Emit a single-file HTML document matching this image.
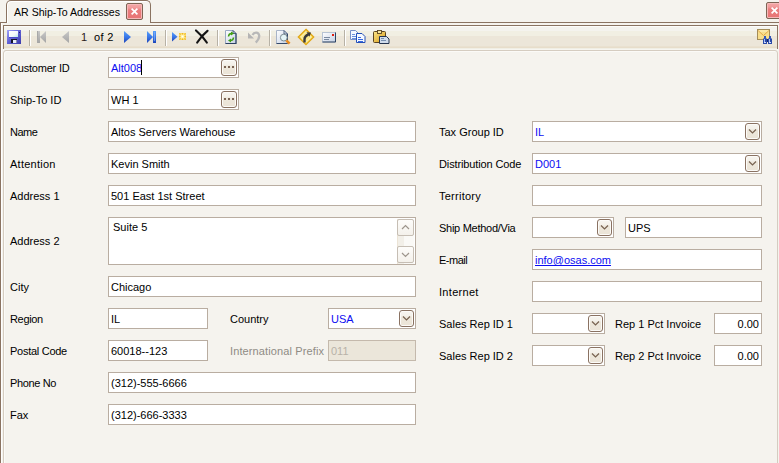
<!DOCTYPE html>
<html><head><meta charset="utf-8">
<style>
*{box-sizing:border-box;margin:0;padding:0}
html,body{width:779px;height:463px;overflow:hidden;background:#f5f3ee;font-family:"Liberation Sans",sans-serif;font-size:11px;color:#000}
.a{position:absolute}
.lbl{position:absolute;font-size:11px;line-height:13px;white-space:nowrap;color:#000}
.box{position:absolute;background:#fff;border:1px solid #b9ada1;height:21px}
.box .t{position:absolute;left:2px;top:4px;font-size:11px;line-height:13px;white-space:nowrap}
.blue{color:#0c0cf2}
.ell{position:absolute;width:16px;height:17px;top:1px;right:1px;border:1px solid #8a7262;border-radius:3px;background:linear-gradient(#f7f5f0 0,#f4f1ea 30%,#ede7db 42%,#ebe4d7 100%);box-shadow:inset 0 0 0 1px #fcfbf8}
.ell i{position:absolute;top:6px;width:2px;height:2px;background:#7b6454}
.dd{position:absolute;width:15px;height:17px;top:1px;right:1px;border:1px solid #8a7262;border-radius:3px;background:linear-gradient(#f7f5f0 0,#f4f1ea 30%,#ede7db 42%,#ebe4d7 100%);box-shadow:inset 0 0 0 1px #fcfbf8}
.dd svg{position:absolute;left:2px;top:4px}
.sbb{width:17px;height:17px;border:1px solid #c6beb4;border-radius:2px;background:linear-gradient(#fdfcfa,#f4f1eb)}
.cb{width:17px;height:17px;border:1px solid #7d6454;border-radius:2px;background:linear-gradient(#f4a8a8 0,#f09a9a 4px,#e97e7e 6px,#e87474 100%);box-shadow:inset 0 0 0 1px #f6b8b8}
.sep{position:absolute;top:30px;width:2px;height:16px;border-left:1px solid #b8b3a8;border-right:1px solid #fff}
</style></head><body>

<!-- tab strip -->
<div class="a" style="left:0;top:22px;width:779px;height:1px;background:#8a7361"></div>
<div class="a" style="left:6px;top:0;width:145px;height:23px;background:#f5f3ee;border:1px solid #8a7361;border-bottom:none;border-radius:5px 5px 0 0;box-shadow:inset 1px 1px 0 #fff"></div>
<div class="a" style="left:14px;top:5px;font-size:10.6px;line-height:14px;white-space:nowrap">AR Ship-To Addresses</div>
<div class="a cb" style="left:126px;top:3px"><svg class="a" style="left:4px;top:4px" width="7" height="7" viewBox="0 0 7 7"><path d="M0.6 0.6L6.4 6.4M6.4 0.6L0.6 6.4" stroke="#fff" stroke-width="1.7"/></svg></div>
<div class="a cb" style="left:766px;top:2px"><svg class="a" style="left:4px;top:4px" width="7" height="7" viewBox="0 0 7 7"><path d="M0.6 0.6L6.4 6.4M6.4 0.6L0.6 6.4" stroke="#fff" stroke-width="1.7"/></svg></div>
<div class="a" style="left:0;top:22px;width:1px;height:441px;background:#8a7361"></div>
<div class="a" style="left:1px;top:23px;width:1px;height:440px;background:#fff"></div>

<!-- toolbar -->
<div class="a" style="left:3px;top:25px;width:775px;height:24px;border:1px solid #8a7361;border-bottom:none;background:linear-gradient(#fdfcf9 0,#fdfcf9 1px,#f4f3ee 1px,#f4f3ee 5px,#f1efe3 5px,#f1efe3 10px,#ece6d9 10px,#ece6d9 20px,#e9e1d0 20px,#e9e1d0 21px,#e7ddca 21px,#e7ddca 22px,#f0eee4 22px)"></div>
<div class="a" style="left:3px;top:49px;width:775px;height:1px;background:#f6f5f0"></div>

<!-- form panel -->
<div class="a" style="left:3px;top:50px;width:775px;height:420px;border:1px solid #d5ccc0;border-radius:3px;background:#f5f3ee;box-shadow:inset 1px 1px 0 #fbfaf7"></div>

<!-- toolbar icons -->
<svg class="a" style="left:0;top:0" width="779" height="50" viewBox="0 0 779 50">
<defs>
<linearGradient id="gSave" x1="0" y1="0" x2="1" y2="1"><stop offset="0" stop-color="#a4a4fa"/><stop offset="0.45" stop-color="#6464d8"/><stop offset="1" stop-color="#3a3aac"/></linearGradient>
<linearGradient id="gLbl" x1="0" y1="0" x2="1" y2="1"><stop offset="0" stop-color="#ffffff"/><stop offset="0.6" stop-color="#f4f8fc"/><stop offset="1" stop-color="#b8e8e8"/></linearGradient>
<linearGradient id="gBlue" x1="0" y1="0" x2="0" y2="1"><stop offset="0" stop-color="#5aa0fa"/><stop offset="0.5" stop-color="#3a78e8"/><stop offset="1" stop-color="#1c44b8"/></linearGradient>
<linearGradient id="gGray" x1="0" y1="0" x2="0" y2="1"><stop offset="0" stop-color="#c8c8c8"/><stop offset="1" stop-color="#a4a4a4"/></linearGradient>
<linearGradient id="gDoc" x1="0" y1="0" x2="1" y2="1"><stop offset="0" stop-color="#ffffff"/><stop offset="1" stop-color="#c4d0e4"/></linearGradient>
<linearGradient id="gGold" x1="0" y1="0" x2="1" y2="1"><stop offset="0" stop-color="#fae488"/><stop offset="1" stop-color="#d89c18"/></linearGradient>
<radialGradient id="gStar"><stop offset="0" stop-color="#ffffff"/><stop offset="0.45" stop-color="#fff0a0"/><stop offset="1" stop-color="#f8d458"/></radialGradient>
</defs>
<!-- save -->
<rect x="7" y="30" width="14" height="14" fill="url(#gSave)"/>
<rect x="9" y="31" width="9" height="7" fill="#4c4cc8"/>
<rect x="9" y="31" width="9" height="6" fill="url(#gLbl)"/>
<rect x="19" y="32" width="1" height="1" fill="#20206a"/>
<rect x="11" y="39" width="6" height="4" fill="#e8eef8"/>
<path d="M11 39H17V40H13V43H11Z" fill="#141428"/>
<rect x="16" y="40" width="1" height="3" fill="#8a8ab0"/>
<!-- sep -->
<rect x="29" y="30" width="1" height="16" fill="#b7b2a6"/><rect x="30" y="30" width="1" height="16" fill="#ffffff"/>
<!-- first -->
<rect x="37" y="31" width="3" height="12" fill="url(#gGray)"/>
<rect x="37" y="31" width="1" height="12" fill="#a8a8a8"/>
<path d="M46 31V43L40 37Z" fill="url(#gGray)"/>
<!-- prev -->
<path d="M69 31V43L62 37Z" fill="url(#gGray)"/>
<!-- next -->
<path d="M124 31V43L131 37Z" fill="url(#gBlue)"/>
<!-- last -->
<path d="M147 31V43L153 37Z" fill="url(#gBlue)"/>
<rect x="153" y="31" width="3" height="12" fill="url(#gBlue)"/>
<rect x="154" y="32" width="1" height="9" fill="#8ab8f8" opacity="0.6"/>
<!-- sep -->
<rect x="165" y="30" width="1" height="16" fill="#b7b2a6"/><rect x="166" y="30" width="1" height="16" fill="#ffffff"/>
<!-- new -->
<path d="M172 32V41.5L177.5 36.75Z" fill="url(#gBlue)"/>
<rect x="179" y="33" width="7" height="7" fill="url(#gStar)"/>
<path d="M182.5 33V34.5M182.5 38.5V40M179 36.5H180.5M184.5 36.5H186M179.5 33.5L180.5 34.5M185.5 33.5L184.5 34.5M179.5 39.5L180.5 38.5M185.5 39.5L184.5 38.5" stroke="#eeb428" stroke-width="1"/>
<!-- delete -->
<path d="M196 30.5C199.5 33.5 203.5 37.5 206.8 42.5" stroke="#151515" stroke-width="2.2" fill="none" stroke-linecap="round"/>
<path d="M207.5 30.8C203.5 34 200 38 197.2 42.5" stroke="#151515" stroke-width="2.2" fill="none" stroke-linecap="round"/>
<!-- sep -->
<rect x="217" y="30" width="1" height="16" fill="#b7b2a6"/><rect x="218" y="30" width="1" height="16" fill="#ffffff"/>
<!-- refresh doc -->
<path d="M225.5 30.5H233L236 33.5V43.5H225.5Z" fill="url(#gDoc)" stroke="#9aaac4"/>
<path d="M236 33.5V43.5H225.5" fill="none" stroke="#2c4262" stroke-width="1.2"/>
<path d="M233 30.5L236 33.5H233Z" fill="#d0dcec" stroke="#2c4262" stroke-width="0.8"/>
<path d="M228.5 36.5C228.6 34.5 229.8 33.6 231.5 33.5M233.5 37.5C233.4 39.5 232.2 40.4 230.5 40.5" stroke="#40a010" stroke-width="1.5" fill="none"/>
<path d="M231 31.5L234 33.5L231 35.5Z M231 42.5L228 40.5L231 38.5Z" fill="#40a010"/>
<!-- undo gray -->
<path d="M252.5 35C254 32 258.5 31.5 259.2 35.5C259.6 38.5 257.5 40.8 255.8 42.6" stroke="#b8b8b8" stroke-width="2.3" fill="none"/>
<path d="M248 32.5V38.5H254Z" fill="#b4b4b4"/>
<!-- sep -->
<rect x="269" y="30" width="1" height="16" fill="#b7b2a6"/><rect x="270" y="30" width="1" height="16" fill="#ffffff"/>
<!-- preview -->
<path d="M276.5 30.5H284L287.5 34V43.5H276.5Z" fill="url(#gDoc)" stroke="#a8b4c8"/>
<path d="M287.5 34V43.5H276.5" fill="none" stroke="#34496a" stroke-width="1"/>
<path d="M284 30.5L287.5 34H284Z" fill="#dfe6f0" stroke="#34496a" stroke-width="0.8"/>
<circle cx="283.8" cy="37.6" r="3.4" fill="#e4f4f6" stroke="#7c8c92" stroke-width="1"/>
<path d="M286.3 40.3L289.6 43.6" stroke="#e88c20" stroke-width="2.6"/>
<!-- goto -->
<path d="M306 29.3L313.7 37L306 44.7L298.3 37Z" fill="#f8dc58" stroke="#e2a818" stroke-width="1.3"/>
<path d="M306 31.6L311.4 37L306 42.4L300.6 37Z" fill="#fbe88a" stroke="#fffbe0" stroke-width="0.7"/>
<path d="M304.5 42.5V39.5C304.5 37 305.8 35.5 308.5 34.5" stroke="#3a3a3a" stroke-width="2.4" fill="none"/>
<path d="M306.5 32.2L311 32.5L309.5 36.8Z" fill="#3a3a3a"/>
<!-- card -->
<rect x="322.5" y="32.5" width="13" height="9.5" fill="url(#gDoc)" stroke="#b8c4d4"/>
<path d="M335.5 32.5V42H322.5" fill="none" stroke="#2c4262" stroke-width="1"/>
<rect x="332" y="34" width="2" height="2" fill="#e02010"/>
<path d="M324 37.5H330M324 39.5H329" stroke="#7a8aa0" stroke-width="1"/>
<!-- sep -->
<rect x="344" y="30" width="1" height="16" fill="#b7b2a6"/><rect x="345" y="30" width="1" height="16" fill="#ffffff"/>
<!-- copy -->
<path d="M350.5 30.5H355.5L358 33V39.5H350.5Z" fill="#f6f9ff" stroke="#7890c8"/>
<path d="M352 34.5H355M352 36.5H356M352 38.5H356" stroke="#6a90e0" stroke-width="1"/>
<path d="M356.5 33.5H362L365 36.5V42.5H356.5Z" fill="#f6f9ff" stroke="#2450b8"/>
<path d="M358 37.5H361M358 39.5H363M358 41.5H363" stroke="#3a6ae0" stroke-width="1"/>
<!-- paste -->
<rect x="373.5" y="31.5" width="12" height="11" rx="1" fill="url(#gGold)" stroke="#5a4420"/>
<rect x="377.5" y="30.5" width="4" height="3" fill="#f8e8a0" stroke="#5a4420" stroke-width="0.9"/>
<path d="M379.5 36.5H386.5L389 39V43.5H379.5Z" fill="#d0dcec" stroke="#243450"/>
<path d="M381 38.5H384M381 40.5H386" stroke="#7890b0" stroke-width="1"/>
<!-- email -->
<rect x="757.5" y="29.5" width="12" height="10" fill="#f8de8c" stroke="#a48c58"/>
<rect x="758" y="30" width="11" height="2" fill="#fbe8a8"/>
<path d="M758 30.5L763.5 35.5L769 30.5" fill="none" stroke="#e4a848" stroke-width="1"/>
<path d="M763 38.5h4v5.5h-4z M768 38.5h4v5.5h-4z" fill="#2a4aa8"/>
<rect x="764" y="36" width="2" height="3" fill="#3456b8"/><rect x="769" y="36" width="2" height="3" fill="#3456b8"/>
<rect x="767" y="39" width="1" height="3" fill="#142470"/>
<rect x="764" y="39" width="1" height="3" fill="#a8c0f4"/><rect x="769" y="39" width="1" height="3" fill="#a8c0f4"/>
<rect x="764" y="42" width="2" height="1" fill="#d0dcff"/><rect x="769" y="42" width="2" height="1" fill="#d0dcff"/>
</svg>

<div class="a" style="left:81px;top:31px;font-size:11px;line-height:13px;color:#2a1a1a">1</div><div class="a" style="left:94px;top:31px;font-size:11px;line-height:13px;letter-spacing:0.3px">of 2</div>

<!-- left column -->
<div class="lbl" style="left:10px;top:62px;letter-spacing:-0.2px">Customer ID</div>
<div class="box" style="left:108px;top:57px;width:131px"><span class="t blue">Alt008</span><div class="a" style="left:32px;top:2px;width:1px;height:15px;background:#000"></div><div class="ell"><i style="left:2px"></i><i style="left:6px"></i><i style="left:10px"></i></div></div>
<div class="lbl" style="left:10px;top:94px">Ship-To ID</div>
<div class="box" style="left:108px;top:89px;width:131px"><span class="t">WH 1</span><div class="ell"><i style="left:2px"></i><i style="left:6px"></i><i style="left:10px"></i></div></div>
<div class="lbl" style="left:10px;top:126px;letter-spacing:-0.5px">Name</div>
<div class="box" style="left:108px;top:121px;width:308px"><span class="t">Altos Servers Warehouse</span></div>
<div class="lbl" style="left:10px;top:158px;letter-spacing:0.25px">Attention</div>
<div class="box" style="left:108px;top:153px;width:308px"><span class="t">Kevin Smith</span></div>
<div class="lbl" style="left:10px;top:190px">Address 1</div>
<div class="box" style="left:108px;top:185px;width:308px"><span class="t">501 East 1st Street</span></div>
<div class="lbl" style="left:10px;top:235px">Address 2</div>
<div class="box" style="left:108px;top:217px;width:308px;height:48px"><span class="t" style="left:4px;top:3px">Suite 5</span><div class="a" style="left:288px;top:1px;width:17px;height:45px;background:linear-gradient(90deg,#ece4d6 0,#ece4d6 1px,#f2efe8 1px,#f2efe8 7px,#faf9f6 7px)">
<div class="a sbb" style="left:0;top:0"><svg width="15" height="15"><path d="M4 9L7.5 5.5L11 9" fill="none" stroke="#9d958c" stroke-width="1.2"/></svg></div>
<div class="a sbb" style="left:0;top:27px"><svg width="15" height="15"><path d="M4 6L7.5 9.5L11 6" fill="none" stroke="#9d958c" stroke-width="1.2"/></svg></div>
</div></div>
<div class="lbl" style="left:10px;top:281px">City</div>
<div class="box" style="left:108px;top:276px;width:308px"><span class="t">Chicago</span></div>
<div class="lbl" style="left:10px;top:313px;letter-spacing:-0.33px">Region</div>
<div class="box" style="left:108px;top:308px;width:100px"><span class="t">IL</span></div>
<div class="lbl" style="left:230px;top:313px">Country</div>
<div class="box" style="left:328px;top:308px;width:88px"><span class="t blue">USA</span><div class="dd"><svg width="9" height="7"><path d="M1 1.5L4.5 5L8 1.5" fill="none" stroke="#76614f" stroke-width="1.2"/></svg></div></div>
<div class="lbl" style="left:10px;top:345px;letter-spacing:-0.27px">Postal Code</div>
<div class="box" style="left:108px;top:340px;width:100px"><span class="t">60018--123</span></div>
<div class="lbl" style="left:230px;top:345px;color:#8f8b85;letter-spacing:0.12px">International Prefix</div>
<div class="box" style="left:328px;top:340px;width:88px;background:#ebe6da;border-color:#c4b9ac"><span class="t" style="color:#b8b2a8">011</span></div>
<div class="lbl" style="left:10px;top:377px;letter-spacing:-0.37px">Phone No</div>
<div class="box" style="left:108px;top:372px;width:308px"><span class="t">(312)-555-6666</span></div>
<div class="lbl" style="left:10px;top:409px">Fax</div>
<div class="box" style="left:108px;top:404px;width:308px"><span class="t">(312)-666-3333</span></div>

<!-- right column -->
<div class="lbl" style="left:439px;top:126px">Tax Group ID</div>
<div class="box" style="left:532px;top:121px;width:230px"><span class="t blue">IL</span><div class="dd"><svg width="9" height="7"><path d="M1 1.5L4.5 5L8 1.5" fill="none" stroke="#76614f" stroke-width="1.2"/></svg></div></div>
<div class="lbl" style="left:439px;top:158px;letter-spacing:-0.12px">Distribution Code</div>
<div class="box" style="left:532px;top:153px;width:230px"><span class="t blue">D001</span><div class="dd"><svg width="9" height="7"><path d="M1 1.5L4.5 5L8 1.5" fill="none" stroke="#76614f" stroke-width="1.2"/></svg></div></div>
<div class="lbl" style="left:439px;top:190px;letter-spacing:0.25px">Territory</div>
<div class="box" style="left:532px;top:185px;width:230px"></div>
<div class="lbl" style="left:439px;top:222px;letter-spacing:-0.27px">Ship Method/Via</div>
<div class="box" style="left:532px;top:217px;width:82px"><div class="dd"><svg width="9" height="7"><path d="M1 1.5L4.5 5L8 1.5" fill="none" stroke="#76614f" stroke-width="1.2"/></svg></div></div>
<div class="box" style="left:625px;top:217px;width:137px"><span class="t">UPS</span></div>
<div class="lbl" style="left:439px;top:254px;letter-spacing:-0.5px">E-mail</div>
<div class="box" style="left:532px;top:249px;width:230px"><span class="t blue" style="text-decoration:underline;text-decoration-skip-ink:none">info@osas.com</span></div>
<div class="lbl" style="left:439px;top:286px;letter-spacing:0.3px">Internet</div>
<div class="box" style="left:532px;top:281px;width:230px"></div>
<div class="lbl" style="left:439px;top:318px">Sales Rep ID 1</div>
<div class="box" style="left:532px;top:313px;width:73px"><div class="dd"><svg width="9" height="7"><path d="M1 1.5L4.5 5L8 1.5" fill="none" stroke="#76614f" stroke-width="1.2"/></svg></div></div>
<div class="lbl" style="left:615px;top:318px">Rep 1 Pct Invoice</div>
<div class="box" style="left:714px;top:313px;width:48px"><span class="t" style="left:auto;right:2px">0.00</span></div>
<div class="lbl" style="left:439px;top:350px">Sales Rep ID 2</div>
<div class="box" style="left:532px;top:345px;width:73px"><div class="dd"><svg width="9" height="7"><path d="M1 1.5L4.5 5L8 1.5" fill="none" stroke="#76614f" stroke-width="1.2"/></svg></div></div>
<div class="lbl" style="left:615px;top:350px">Rep 2 Pct Invoice</div>
<div class="box" style="left:714px;top:345px;width:48px"><span class="t" style="left:auto;right:2px">0.00</span></div>

</body></html>
